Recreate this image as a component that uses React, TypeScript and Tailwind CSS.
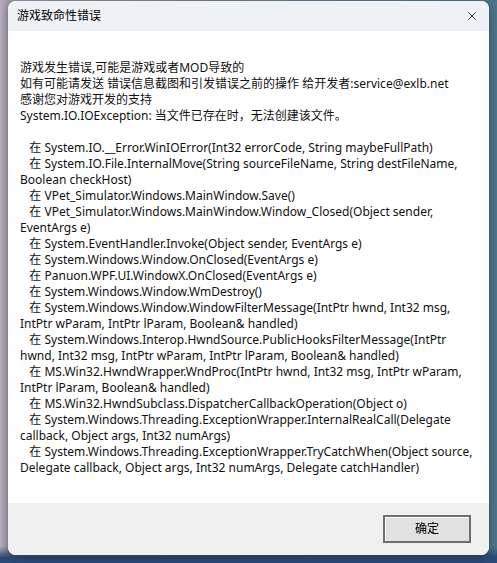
import { X } from "lucide-react";

const intro = [
  "游戏发生错误,可能是游戏或者MOD导致的",
  "如有可能请发送 错误信息截图和引发错误之前的操作 给开发者:service@exlb.net",
  "感谢您对游戏开发的支持",
  "System.IO.IOException: 当文件已存在时，无法创建该文件。",
  "",
];

// stack trace lines, wrapped the same way the dialog wraps them
const trace = [
  "   在 System.IO.__Error.WinIOError(Int32 errorCode, String maybeFullPath)",
  "   在 System.IO.File.InternalMove(String sourceFileName, String destFileName,",
  "Boolean checkHost)",
  "   在 VPet_Simulator.Windows.MainWindow.Save()",
  "   在 VPet_Simulator.Windows.MainWindow.Window_Closed(Object sender,",
  "EventArgs e)",
  "   在 System.EventHandler.Invoke(Object sender, EventArgs e)",
  "   在 System.Windows.Window.OnClosed(EventArgs e)",
  "   在 Panuon.WPF.UI.WindowX.OnClosed(EventArgs e)",
  "   在 System.Windows.Window.WmDestroy()",
  "   在 System.Windows.Window.WindowFilterMessage(IntPtr hwnd, Int32 msg,",
  "IntPtr wParam, IntPtr lParam, Boolean& handled)",
  "   在 System.Windows.Interop.HwndSource.PublicHooksFilterMessage(IntPtr",
  "hwnd, Int32 msg, IntPtr wParam, IntPtr lParam, Boolean& handled)",
  "   在 MS.Win32.HwndWrapper.WndProc(IntPtr hwnd, Int32 msg, IntPtr wParam,",
  "IntPtr lParam, Boolean& handled)",
  "   在 MS.Win32.HwndSubclass.DispatcherCallbackOperation(Object o)",
  "   在 System.Windows.Threading.ExceptionWrapper.InternalRealCall(Delegate",
  "callback, Object args, Int32 numArgs)",
  "   在 System.Windows.Threading.ExceptionWrapper.TryCatchWhen(Object source,",
  "Delegate callback, Object args, Int32 numArgs, Delegate catchHandler)",
];

export default function App() {
  return (
    <div
      className="h-[563px] w-[497px] overflow-hidden bg-[linear-gradient(180deg,transparent_0%,transparent_97%,#2c4a78_99%),linear-gradient(90deg,#b9b0bd_0%,#9f95a8_2%,#6a7f95_50%,#4c7789_100%)] pl-[8px] pr-[8px] pt-[1px]"
      style={{ fontFamily: '"Noto Sans", "Noto Sans CJK SC", sans-serif' }}
    >
      <div className="flex h-[554px] w-[481px] flex-col overflow-hidden rounded-[8px] bg-white shadow-[0_2px_10px_rgba(0,0,0,0.35)]">
        <div className="flex h-[30px] shrink-0 items-center justify-between bg-[#eef2f7] pl-[9px] pr-[10px]">
          <span className="text-[12px] text-black">游戏致命性错误</span>
          <X size={14} strokeWidth={1.3} className="text-black" />
        </div>

        <div className="flex-1 bg-white pl-[12px] pt-[29px] text-[12px] leading-[16px] text-[#111111]">
          {[...intro, ...trace].map((line, i) => (
            <div key={i} className="h-[16px] whitespace-pre">
              {line}
            </div>
          ))}
        </div>

        <div className="flex h-[52px] shrink-0 items-start justify-end bg-[#f0f0f0] pr-[18px] pt-[12px]">
          <button className="flex h-[28px] w-[88px] items-center justify-center border-2 border-[#6f6f6f] bg-[#e1e1e1] text-[12px] text-black shadow-[inset_1px_1px_0_#ffffff]">
            确定
          </button>
        </div>
      </div>
    </div>
  );
}
